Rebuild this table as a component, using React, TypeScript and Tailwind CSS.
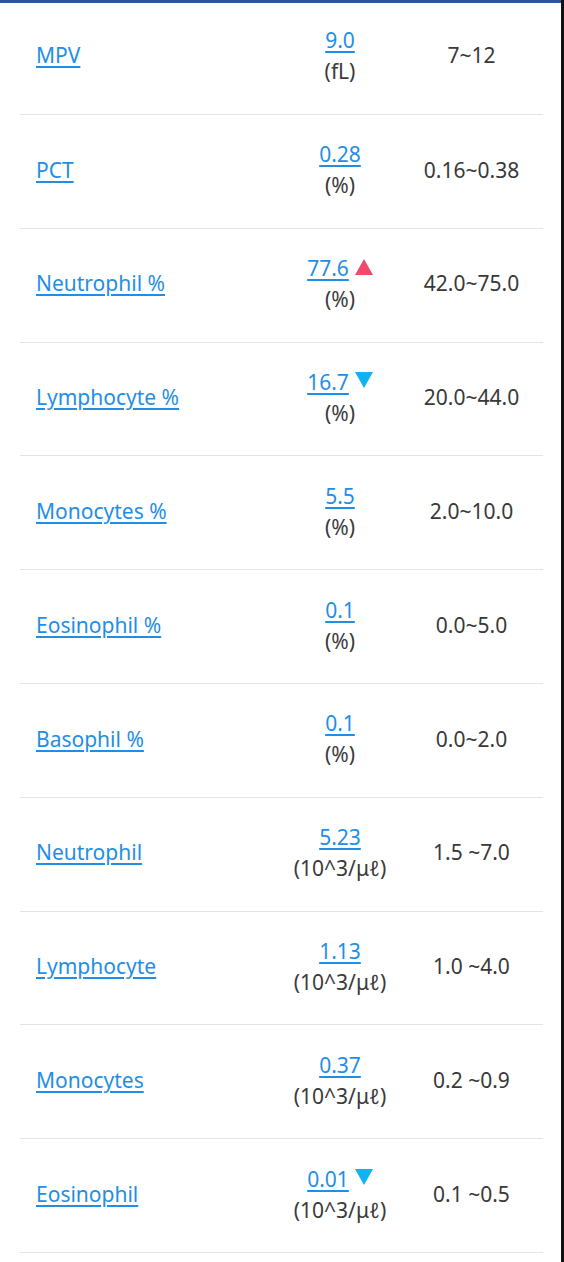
import React from "react";

type Row = {
  name: string;
  value: string;
  unit: string;
  range: string;
  flag?: "up" | "down";
};

const rows: Row[] = [
  { name: "MPV", value: "9.0", unit: "(fL)", range: "7~12" },
  { name: "PCT", value: "0.28", unit: "(%)", range: "0.16~0.38" },
  { name: "Neutrophil %", value: "77.6", unit: "(%)", range: "42.0~75.0", flag: "up" },
  { name: "Lymphocyte %", value: "16.7", unit: "(%)", range: "20.0~44.0", flag: "down" },
  { name: "Monocytes %", value: "5.5", unit: "(%)", range: "2.0~10.0" },
  { name: "Eosinophil %", value: "0.1", unit: "(%)", range: "0.0~5.0" },
  { name: "Basophil %", value: "0.1", unit: "(%)", range: "0.0~2.0" },
  { name: "Neutrophil", value: "5.23", unit: "(10^3/μℓ)", range: "1.5 ~7.0" },
  { name: "Lymphocyte", value: "1.13", unit: "(10^3/μℓ)", range: "1.0 ~4.0" },
  { name: "Monocytes", value: "0.37", unit: "(10^3/μℓ)", range: "0.2 ~0.9" },
  { name: "Eosinophil", value: "0.01", unit: "(10^3/μℓ)", range: "0.1 ~0.5", flag: "down" },
];

function Flag({ dir }: { dir: "up" | "down" }) {
  return (
    <svg width="18" height="16" viewBox="0 0 18 16" className="ml-[6px] mt-[-4px]">
      {dir === "up" ? (
        <polygon points="9,0 18,16 0,16" fill="#f2486c" />
      ) : (
        <polygon points="0,0 18,0 9,16" fill="#10b3ef" />
      )}
    </svg>
  );
}

export default function App() {
  return (
    <div
      className="w-[564px] h-[1262px] flex bg-white overflow-hidden"
      style={{ fontFamily: '"Noto Sans", "Noto Sans CJK KR", sans-serif' }}
    >
      <div className="flex-1 flex flex-col">
        <div className="h-[3px] bg-[#2b579f]" />
        <div className="pl-[20px] w-[543px]">
          {rows.map((r, i) => (
            <div
              key={r.name}
              className={
                "grid grid-cols-[260px_120px_1fr] items-center border-b border-[#e4e4e4] text-[21px] " +
                (i === 0 ? "h-[112px] pb-[5px]" : "h-[113.8px] pb-[2px]")
              }
            >
              <div className="pl-4">
                <a className="text-[#1f8ee6] underline decoration-[1.5px] underline-offset-[3px]">
                  {r.name}
                </a>
              </div>
              <div className="flex flex-col items-center leading-[31px]">
                <div className="flex items-center">
                  <a className="text-[#1f8ee6] underline decoration-[1.5px] underline-offset-[3px]">
                    {r.value}
                  </a>
                  {r.flag && <Flag dir={r.flag} />}
                </div>
                <div className="text-[#3a3a3a]">{r.unit}</div>
              </div>
              <div className="text-center text-[#383838]">{r.range}</div>
            </div>
          ))}
        </div>
      </div>
      <div className="w-[3px] bg-[#111111]" />
    </div>
  );
}
